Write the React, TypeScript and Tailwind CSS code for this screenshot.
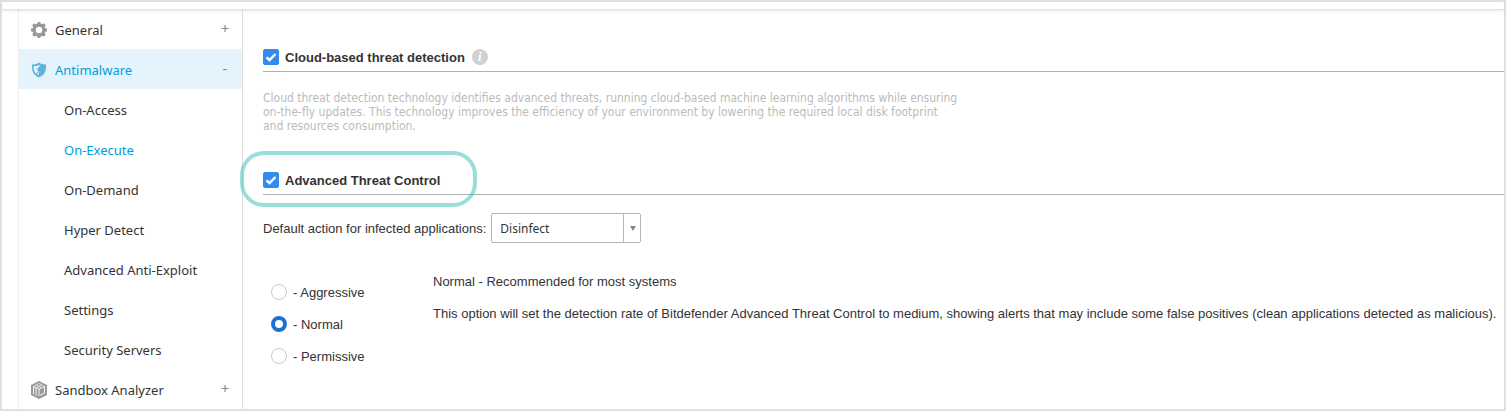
import { useState, type ReactNode } from 'react'
import { clsx } from 'clsx'

const subItems = [
  'On-Access',
  'On-Execute',
  'On-Demand',
  'Hyper Detect',
  'Advanced Anti-Exploit',
  'Settings',
  'Security Servers',
]

const levels = ['Aggressive', 'Normal', 'Permissive']

function GearIcon() {
  return (
    <svg viewBox="0 0 16 16" className="size-4 text-[#999]" fill="currentColor" aria-hidden>
      <path
        fillRule="evenodd"
        d="M6.6 0h2.8l.4 1.7 1.3.5 1.6-1 2.1 2.1-1 1.6.5 1.3 1.7.4v2.8l-1.7.4-.5 1.3 1 1.6-2.1 2.1-1.6-1-1.3.5-.4 1.7H6.6l-.4-1.7-1.3-.5-1.6 1-2.1-2.1 1-1.6-.5-1.3L0 9.400V6.600l1.700-.4.5-1.300-1-1.600 2.100-2.100 1.600 1 1.300-.5zM8 4.800a3.200 3.200 0 1 0 0 6.400 3.200 3.200 0 0 0 0-6.400z"
      />
    </svg>
  )
}

function ShieldIcon() {
  return (
    <svg viewBox="0 0 16 16" className="size-4" aria-hidden>
      <path d="M8 .5c2 1.500 4.500 2 7 2 .4 6-1.200 10.700-7 13-5.800-2.300-7.400-7-7-13 2.500 0 5-.5 7-2z" fill="#5bb5db" />
      <path d="M9.800 2.500C7.500 3.500 5 4 2.500 4c0 3 .6 5.600 2.500 7.500L7.500 9 5.500 8zM8 9l-2 3.500 1.500 1z" fill="#e5f4fc" />
    </svg>
  )
}

function BoxIcon() {
  return (
    <svg viewBox="0 0 16 18" className="h-[18px] w-4" aria-hidden>
      <path d="m8 0 8 4v10l-8 4-8-4V4z" fill="#999" />
      <g fill="none" stroke="#fff" strokeWidth=".9">
        <path d="M2.500 13V5.500L8 8.200l5.500-2.700V12L9 14.200" />
        <path d="M5 7v7.500M8 8.200V15" />
        <path d="M2.500 5.200 8 2.500l5.500 2.700M5.200 4l5.500 2.700M10.800 4 5.300 6.700" opacity=".7" />
      </g>
    </svg>
  )
}

function NavSection({ icon, label, active }: { icon: ReactNode; label: string; active?: boolean }) {
  return (
    <button
      type="button"
      aria-expanded={!!active}
      className={clsx('flex h-10 w-full items-center px-3 pt-px', active && 'bg-[#e5f4fc] text-[#009ddc]')}
    >
      {icon}
      <span className="ml-2 flex-1 text-left">{label}</span>
      <span className="mb-1 w-2.5 text-center text-[15px] text-[#888]">{active ? '-' : '+'}</span>
    </button>
  )
}

function SectionHeader({ label, children }: { label: string; children?: ReactNode }) {
  return (
    <div className="flex h-[30px] items-center gap-[7px] border-b border-[#b0b0b0]">
      <label className="flex items-center gap-1.5 font-bold">
        <span className="grid">
          <input
            type="checkbox"
            defaultChecked
            className="peer col-start-1 row-start-1 size-4 appearance-none rounded-[2px] border border-[#ccc] checked:border-[#328cf0] checked:bg-[#328cf0]"
          />
          <svg viewBox="0 0 16 16" className="pointer-events-none col-start-1 row-start-1 hidden size-4 peer-checked:block" aria-hidden>
            <path d="m3.500 8.300 3 2.700 6-6" fill="none" stroke="#fff" strokeWidth="2.400" />
          </svg>
        </span>
        <span className="pt-0.5">{label}</span>
      </label>
      {children}
    </div>
  )
}

export default function App() {
  const [level, setLevel] = useState('Normal')

  return (
    <div className="border-2 border-[#e0e0e0] bg-white font-['Liberation_Sans',Arial,sans-serif] text-[13px] leading-4 text-[#333]">
      <header className="relative h-[7px] shadow-[0_1px_0_#e0e0e0,0_2px_3px_#0000001a]" />
      <div className="flex">
        <nav className="ml-4 w-[225px] shrink-0 border-r border-l border-r-[#ddd] border-l-[#eee] font-['Noto_Sans',Tahoma,sans-serif]">
          <NavSection icon={<GearIcon />} label="General" />
          <NavSection icon={<ShieldIcon />} label="Antimalware" active />
          <ul>
            {subItems.map((item) => (
              <li key={item}>
                <a
                  href="#"
                  className={clsx('flex h-10 items-center pt-px pl-[45px]', item === 'On-Execute' && 'text-[#009ddc]')}
                >
                  {item}
                </a>
              </li>
            ))}
          </ul>
          <NavSection icon={<BoxIcon />} label="Sandbox Analyzer" />
        </nav>

        <main className="min-w-0 flex-1 pt-[33px] pl-5">
          <SectionHeader label="Cloud-based threat detection">
            <button
              type="button"
              aria-label="More information"
              className="size-4 rounded-full bg-[#d0d0d0] text-center font-['Liberation_Serif',serif] text-[13px] leading-4 font-bold text-white italic"
            >
              i
            </button>
          </SectionHeader>
          <p className="mt-[19px] w-[710px] font-['DejaVu_Sans_Condensed','DejaVu_Sans',sans-serif] text-[12px] leading-[14px] text-[#bbb]">
            Cloud threat detection technology identifies advanced threats, running cloud-based machine learning algorithms while ensuring
            <br />
            on-the-fly updates. This technology improves the efficiency of your environment by lowering the required local disk footprint
            <br />
            and resources consumption.
          </p>

          <section className="relative mt-8">
            <SectionHeader label="Advanced Threat Control" />
            <div className="pointer-events-none absolute -top-[14px] -left-[23px] h-14 w-[237px] rounded-[24px] border-4 border-[#33bdb7]/50" />
          </section>

          <div className="mt-[18px] flex items-center gap-[5px]">
            <label htmlFor="action" className="pt-0.5">Default action for infected applications:</label>
            <div className="grid h-[30px] w-[150px] grid-cols-[1fr_18px]">
              <select
                id="action"
                className="col-span-2 col-start-1 row-start-1 appearance-none rounded-[2px] border border-[#b5b5b5] px-2 pt-0.5 font-['Noto_Sans',Tahoma,sans-serif] text-[12px]"
              >
                <option>Disinfect</option>
              </select>
              <span className="pointer-events-none col-start-2 row-start-1 flex items-center justify-center border-l border-[#b5b5b5]">
                <svg viewBox="0 0 6 5" className="h-[5px] w-1.5" aria-hidden>
                  <path d="M0 0h6L3 5z" fill="#888" />
                </svg>
              </span>
            </div>
          </div>

          <div className="mt-[31px] flex">
            <fieldset className="ml-2 flex w-[162px] shrink-0 flex-col gap-3.5 pt-[9px]">
              {levels.map((name) => (
                <label key={name} className="flex items-center gap-1.5">
                  <input
                    type="radio"
                    name="level"
                    checked={level === name}
                    onChange={() => setLevel(name)}
                    className="size-4 appearance-none rounded-full border border-[#ccc] checked:border-4 checked:border-[#1d71d4]"
                  />
                  <span className="pt-0.5">- {name}</span>
                </label>
              ))}
            </fieldset>
            <div className="flex flex-col gap-4 whitespace-nowrap">
              <p>{level} - Recommended for most systems</p>
              <p>
                This option will set the detection rate of Bitdefender Advanced Threat Control to medium, showing alerts that may
                include some false positives (clean applications detected as malicious).
              </p>
            </div>
          </div>
        </main>
      </div>
    </div>
  )
}
